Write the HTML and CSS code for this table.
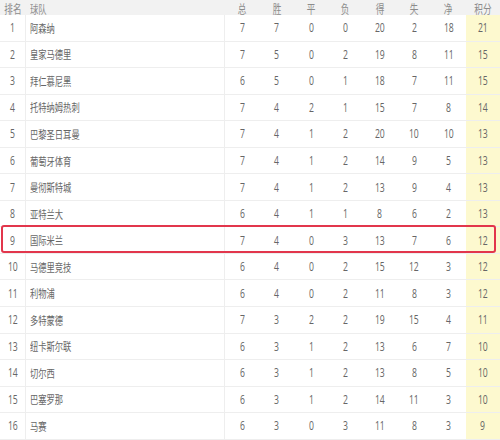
FILE: index.html
```html
<!DOCTYPE html>
<html lang="zh">
<head>
<meta charset="utf-8">
<link rel="stylesheet" href="styles.css">
</head>
<body>
<div class="table">
  <div class="row head">
    <div class="c rank"><span>排名</span></div>
    <div class="c team"><span>球队</span></div>
    <div class="c"><span>总</span></div>
    <div class="c"><span>胜</span></div>
    <div class="c"><span>平</span></div>
    <div class="c"><span>负</span></div>
    <div class="c"><span>得</span></div>
    <div class="c"><span>失</span></div>
    <div class="c"><span>净</span></div>
    <div class="c pts"><span>积分</span></div>
  </div>
  <div id="body"></div>
</div>
<script src="app.js"></script>
</body>
</html>
```

FILE: app.js
```js
const data = [
  [1,"阿森纳",7,7,0,0,20,2,18,21],
  [2,"皇家马德里",7,5,0,2,19,8,11,15],
  [3,"拜仁慕尼黑",6,5,0,1,18,7,11,15],
  [4,"托特纳姆热刺",7,4,2,1,15,7,8,14],
  [5,"巴黎圣日耳曼",7,4,1,2,20,10,10,13],
  [6,"葡萄牙体育",7,4,1,2,14,9,5,13],
  [7,"曼彻斯特城",7,4,1,2,13,9,4,13],
  [8,"亚特兰大",6,4,1,1,8,6,2,13],
  [9,"国际米兰",7,4,0,3,13,7,6,12],
  [10,"马德里竞技",6,4,0,2,15,12,3,12],
  [11,"利物浦",6,4,0,2,11,8,3,12],
  [12,"多特蒙德",7,3,2,2,19,15,4,11],
  [13,"纽卡斯尔联",6,3,1,2,13,6,7,10],
  [14,"切尔西",6,3,1,2,13,8,5,10],
  [15,"巴塞罗那",6,3,1,2,14,11,3,10],
  [16,"马赛",6,3,0,3,11,8,3,9]
];
const body = document.getElementById("body");
data.forEach(r => {
  const row = document.createElement("div");
  row.className = "row" + (r[0] === 9 ? " hl" : "");
  r.forEach((v, i) => {
    const c = document.createElement("div");
    c.className = "c" + (i === 0 ? " rank" : i === 1 ? " team" : i === 9 ? " pts" : "");
    const s = document.createElement("span");
    s.textContent = v;
    c.appendChild(s);
    row.appendChild(c);
  });
  body.appendChild(row);
});
```

FILE: styles.css
```css
html, body {
  margin: 0;
  padding: 0;
  background: #fff;
}
body {
  font-family: "Open Sans", "Noto Sans CJK SC", sans-serif;
  font-size: 12px;
  color: #666;
  width: 500px;
  height: 440px;
  overflow: hidden;
}
.table {
  width: 500px;
}
.row {
  display: grid;
  grid-template-columns: 26px 199px repeat(8, 1fr);
  height: 26.56px;
  border-bottom: 1px solid #eeeeee;
  box-sizing: border-box;
}
.row.head {
  height: 15px;
  background: #f2f2f2;
  color: #8c8c8c;
  border-bottom: none;
}
.c {
  display: flex;
  align-items: center;
  justify-content: center;
  white-space: nowrap;
}
.c span {
  display: inline-block;
  transform: scaleX(0.72);
}
.rank {
  border-right: 1px solid #eeeeee;
}
.team {
  justify-content: flex-start;
  padding-left: 4px;
  border-right: 1px solid #eeeeee;
  font-size: 11.5px;
}
.team span {
  transform-origin: left center;
}
.head .rank, .head .team {
  border-right: none;
}
.pts {
  background: #fdf9cf;
}
.head .pts {
  background: #f2f2f2;
}
.hl {
  position: relative;
}
.hl::after {
  content: "";
  position: absolute;
  left: 1px;
  right: 4px;
  top: -2px;
  bottom: 0;
  border: 2px solid #e2364c;
  border-radius: 3px;
  pointer-events: none;
}
```
